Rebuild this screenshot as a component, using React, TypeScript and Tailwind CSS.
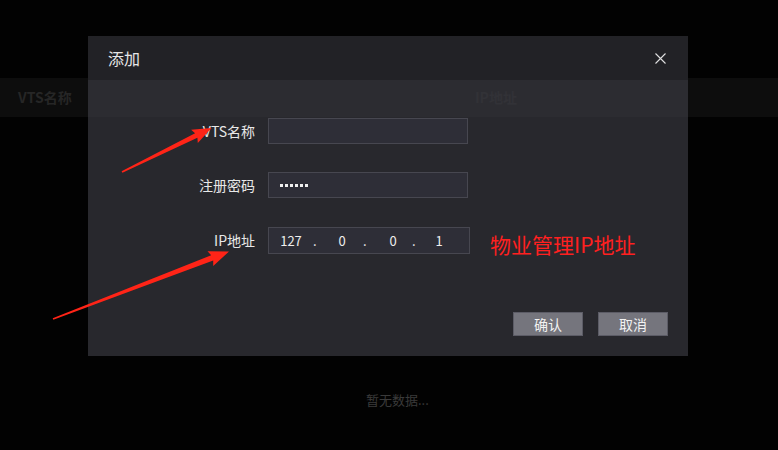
import React from "react";

const FONT = { fontFamily: '"Noto Sans CJK SC", "Noto Sans", sans-serif' };

function arrowPoints(
  tx: number,
  ty: number,
  px: number,
  py: number,
  L: number,
  W: number,
  w0: number,
  w1: number
) {
  const dx = px - tx;
  const dy = py - ty;
  const len = Math.hypot(dx, dy);
  const ux = dx / len;
  const uy = dy / len;
  const nx = -uy;
  const ny = ux;
  const bx = px - ux * L;
  const by = py - uy * L;
  const pts: [number, number][] = [
    [tx + nx * w0, ty + ny * w0],
    [bx + nx * w1, by + ny * w1],
    [bx - ux * 2 + nx * W, by - uy * 2 + ny * W],
    [px, py],
    [bx - ux * 2 - nx * W, by - uy * 2 - ny * W],
    [bx - nx * w1, by - ny * w1],
    [tx - nx * w0, ty - ny * w0],
  ];
  return pts.map((p) => `${p[0].toFixed(1)},${p[1].toFixed(1)}`).join(" ");
}

function Input({ children, h = "h-[26px]", w = "w-[200px]" }: { children?: React.ReactNode; h?: string; w?: string }) {
  return (
    <div className={`${w} ${h} border border-[#474750] bg-[#2e2e37] flex items-center`}>{children}</div>
  );
}

export default function App() {
  return (
    <div className="relative w-[778px] h-[450px] bg-[#020202] overflow-hidden" style={FONT}>
      {/* background page */}
      <div className="flex flex-col">
        <div className="mt-[78px] h-[39px] bg-[#0d0d0d] flex items-center text-[14px] font-bold text-[#262626]">
          <div className="w-[475px] pl-[18px]">VTS名称</div>
          <div className="text-[#1c1c1c]">IP地址</div>
        </div>
        <div className="pl-[366px] pt-[274px] text-[13px] leading-[18px] text-[#3a3a3a]">暂无数据...</div>
      </div>

      {/* dialog */}
      <div className="absolute left-[88px] top-[36px] w-[600px] h-[320px] flex flex-col bg-[rgba(62,62,70,0.64)]">
        <div className="h-[44px] bg-[#222226] flex items-center justify-between pl-[20px] pr-[22px]">
          <span className="text-[16px] text-[#e6e6e6]">添加</span>
          <svg width="11" height="11" viewBox="0 0 11 11" className="mt-[1px]">
            <path d="M0.5 0.5 L10.5 10.5 M10.5 0.5 L0.5 10.5" stroke="#e0e0e0" strokeWidth="1.1" fill="none" />
          </svg>
        </div>
        <div className="flex-1 flex flex-col pt-[38px] text-[14px] text-[#e8e8e8]">
          <div className="flex items-center gap-[13px]">
            <div className="w-[167px] text-right">VTS名称</div>
            <Input />
          </div>
          <div className="flex items-center gap-[13px] mt-[28px]">
            <div className="w-[167px] text-right">注册密码</div>
            <Input>
              <div className="flex gap-[2px] pl-[11px]">
                {[0, 1, 2, 3, 4, 5].map((i) => (
                  <span key={i} className="w-[3px] h-[3px] bg-[#f0f0f0]" />
                ))}
              </div>
            </Input>
          </div>
          <div className="flex items-center mt-[27px]">
            <div className="w-[167px] text-right mr-[13px]">IP地址</div>
            <Input h="h-[27px]" w="w-[202px]">
              <div className="flex items-center pl-[9px] text-[13px] text-[#eeeeee]">
                <span className="w-[26px] text-center">127</span>
                <span className="w-[25px] pl-[9px]">.</span>
                <span className="w-[26px] text-center">0</span>
                <span className="w-[25px] pl-[8px]">.</span>
                <span className="w-[26px] text-center">0</span>
                <span className="w-[20px] pl-[6px]">.</span>
                <span className="w-[26px] text-center">1</span>
              </div>
            </Input>
            <div className="ml-[20px] mt-[7px] text-[21px] text-[#ff2020] leading-[24px]">物业管理IP地址</div>
          </div>
          <div className="flex-1" />
          <div className="flex justify-end gap-[15px] pr-[20px] pb-[20px]">
            <button className="w-[70px] h-[24px] bg-[#75757d] border border-[#5c5c66] text-[14px] text-[#f2f2f2] leading-none">确认</button>
            <button className="w-[70px] h-[24px] bg-[#75757d] border border-[#5c5c66] text-[14px] text-[#f2f2f2] leading-none">取消</button>
          </div>
        </div>
      </div>

      {/* red annotation arrows */}
      <svg className="absolute left-0 top-0 pointer-events-none" width="778" height="450" viewBox="0 0 778 450">
        <polygon points={arrowPoints(122, 172, 211.5, 128, 17, 7.5, 0.8, 2.6)} fill="#ff2417" />
        <polygon points={arrowPoints(53, 319, 229, 251.5, 18, 8, 0.9, 2.8)} fill="#ff2417" />
      </svg>
    </div>
  );
}
